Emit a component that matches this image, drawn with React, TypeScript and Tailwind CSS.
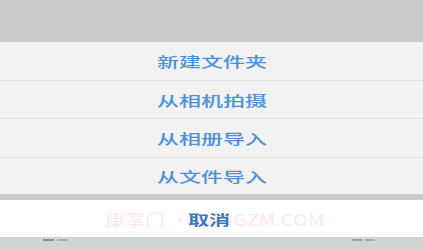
import React from "react";

const items = [
  { label: "新建文件夹", h: "h-[38px]" },
  { label: "从相机拍摄", h: "h-[38px]" },
  { label: "从相册导入", h: "h-[39px]" },
  { label: "从文件导入", h: "h-[37px]" },
];

export default function App() {
  return (
    <div
      className="w-[423px] h-[249px] bg-[#cdcdcd] flex flex-col overflow-hidden"
      style={{ fontFamily: '"Noto Sans CJK SC", "Noto Sans", sans-serif' }}
    >
      <div className="h-[42px] shrink-0 bg-[#cbcbcb]" />
      <div className="flex flex-col bg-[#f2f2f2]">
        {items.map((it, i) => (
          <div
            key={it.label}
            className={`${it.h} flex items-center justify-center ${i > 0 ? "border-t border-[#e2e2e2]" : ""}`}
          >
            <span className="text-[14px] leading-none text-[#4a90da] font-medium scale-x-[1.57] inline-block">
              {it.label}
            </span>
          </div>
        ))}
      </div>
      <div className="h-[6px] shrink-0 bg-[#cacaca]" />
      <div className="relative h-[37px] shrink-0 bg-white flex items-center justify-center">
        <span className="absolute left-[105px] top-[11px] text-[16px] leading-none text-[#fde8f0] scale-x-[1.25] origin-left inline-block whitespace-nowrap">
          康掌门 · KANGZM.COM
        </span>
        <span className="relative mr-[6px] text-[14px] leading-none text-[#3a78c2] font-bold scale-x-[1.5] inline-block">
          取消
        </span>
      </div>
      <div className="flex-1 bg-[#d3d3d3] flex items-start justify-between pl-[43px] pr-[48px] pt-[2px]">
        <div className="flex gap-[3px]">
          <div className="w-[11px] h-[2px] bg-[#8a8a8a]" />
          <div className="w-[10px] h-[2px] bg-[#aaaaaa]" />
        </div>
        <div className="flex gap-[3px]">
          <div className="w-[10px] h-[2px] bg-[#a0a0a0]" />
          <div className="w-[10px] h-[2px] bg-[#a8a8a8]" />
        </div>
      </div>
    </div>
  );
}
